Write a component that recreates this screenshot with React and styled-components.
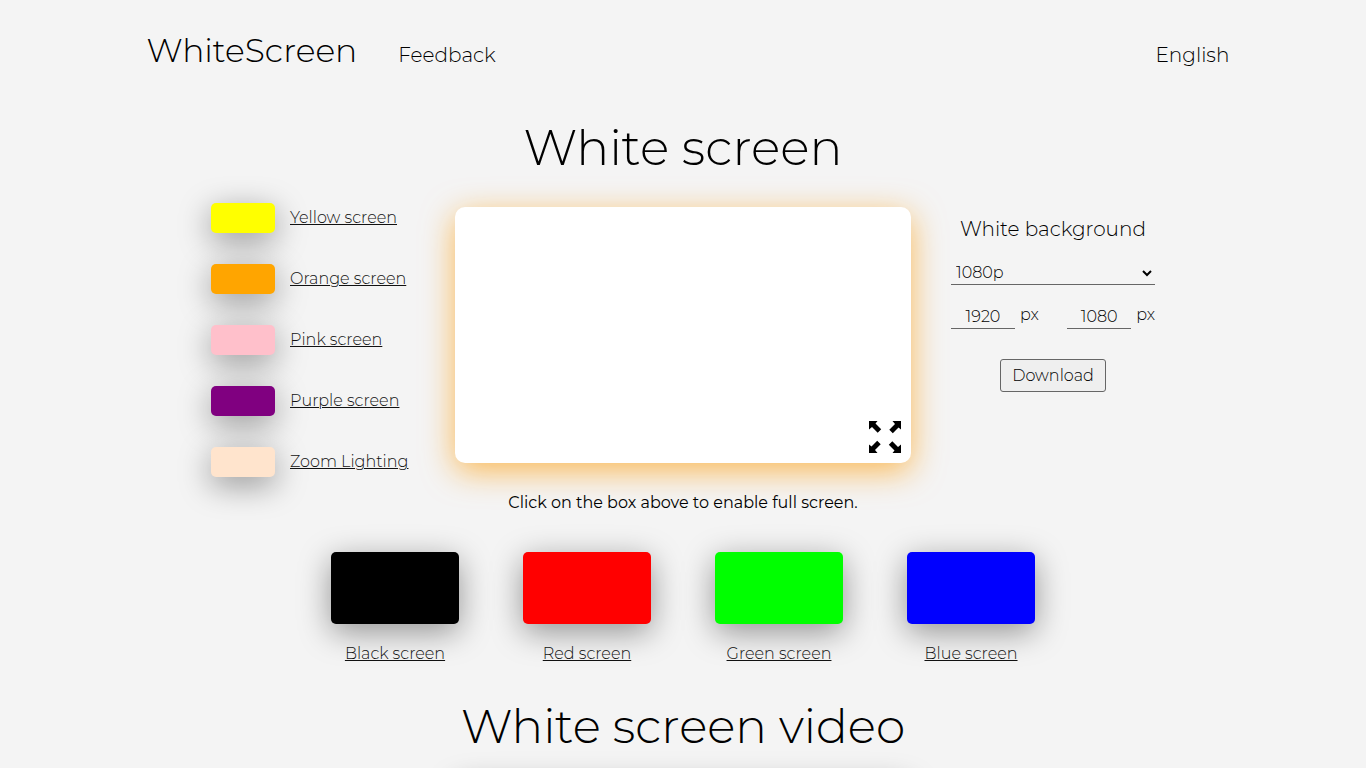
import React, { useState } from 'react';
import styled, { createGlobalStyle } from 'styled-components';

const SIDE_COLORS = [
  { label: 'Yellow screen', color: '#ffff00' },
  { label: 'Orange screen', color: '#ffa500' },
  { label: 'Pink screen', color: '#ffc0cb' },
  { label: 'Purple screen', color: '#800080' },
  { label: 'Zoom Lighting', color: '#ffe4cd' },
];

const MAIN_COLORS = [
  { label: 'Black screen', color: '#000000' },
  { label: 'Red screen', color: '#ff0000' },
  { label: 'Green screen', color: '#00ff00' },
  { label: 'Blue screen', color: '#0000ff' },
];

const RESOLUTIONS = {
  '720p': [1280, 720],
  '1080p': [1920, 1080],
  '1440p': [2560, 1440],
  '4K': [3840, 2160],
};

const GlobalStyle = createGlobalStyle`
  *,
  *::before,
  *::after {
    box-sizing: border-box;
  }

  body {
    margin: 0;
    background: #f4f4f4;
    color: #000;
    font-family: Montserrat, Inter, 'Open Sans', sans-serif;
    font-size: 16px;
    font-weight: 300;
    line-height: 20px;
  }

  a {
    color: inherit;
  }

  button,
  input,
  select {
    color: inherit;
    font: inherit;
  }
`;

const Header = styled.header`
  display: flex;
  align-items: baseline;
  gap: 41px;
  width: 80%;
  margin: 0 auto;
  padding: 30px 0 0 10px;
`;

const Brand = styled.a`
  font-size: 33px;
  line-height: 40px;
  text-decoration: none;
`;

const NavLink = styled.a`
  font-size: 20px;
  line-height: 24px;
  text-decoration: none;

  &:last-child {
    margin-left: auto;
  }
`;

const Title = styled.h1`
  margin: 48px 0 25px;
  font-size: 49px;
  font-weight: 300;
  line-height: 60px;
  text-align: center;
`;

const Stage = styled.section`
  display: flex;
  justify-content: center;
  align-items: flex-start;
  gap: 40px;
`;

const SideList = styled.ul`
  display: flex;
  flex-direction: column;
  gap: 31px;
  width: 204px;
  margin: 0;
  padding: 0;
  list-style: none;
`;

const SideItem = styled.li`
  display: flex;
  align-items: center;
  height: 30px;
`;

const SideLink = styled.a`
  display: flex;
  align-items: center;
  gap: 15px;
  white-space: nowrap;
  color: #111;
  text-decoration-thickness: 1px;
`;

const Swatch = styled.span`
  flex: none;
  width: ${({ $large }) => ($large ? 128 : 64)}px;
  height: ${({ $large }) => ($large ? 72 : 30)}px;
  border-radius: 5px;
  background: ${({ $color }) => $color};
  box-shadow: 0 8px 32px rgba(0, 0, 0, 0.4);
`;

const Preview = styled.div`
  display: flex;
  flex-direction: column;
  align-items: center;
  gap: 30px;
  width: 456px;
  padding-top: 4px;
`;

const ScreenButton = styled.button`
  display: flex;
  justify-content: flex-end;
  align-items: flex-end;
  width: 100%;
  aspect-ratio: 57 / 32;
  padding: 10px;
  border: 0;
  border-radius: 10px;
  background: #fff;
  box-shadow: 0 8px 32px rgba(255, 153, 0, 0.65);
  cursor: pointer;
`;

const Hint = styled.p`
  margin: 0;
  font-weight: 400;
`;

const Form = styled.form`
  display: flex;
  flex-direction: column;
  align-items: center;
  width: 204px;
  padding-top: 14px;
`;

const FormTitle = styled.h2`
  margin: 0 0 20px;
  font-size: 20px;
  font-weight: 300;
  line-height: 24px;
  white-space: nowrap;
`;

const Select = styled.select`
  width: 100%;
  height: 24px;
  padding: 0 0 0 1px;
  border: 0;
  border-bottom: 1px solid #666;
  background: transparent;
`;

const SizeRow = styled.div`
  display: flex;
  justify-content: space-between;
  width: 100%;
  margin-top: 20px;
`;

const SizeLabel = styled.label`
  display: flex;
  gap: 5px;
`;

const SizeInput = styled.input`
  width: 64px;
  height: 24px;
  padding: 0;
  border: 0;
  border-bottom: 1px solid #666;
  background: transparent;
  text-align: center;
`;

const DownloadButton = styled.button`
  height: 33px;
  margin-top: 30px;
  padding: 0 11px;
  border: 1px solid #666;
  border-radius: 3px;
  background: #efefef;
  cursor: pointer;
`;

const ColorGrid = styled.ul`
  display: flex;
  justify-content: center;
  flex-wrap: wrap;
  gap: 64px;
  margin: 39px 0 0;
  padding: 0;
  list-style: none;
`;

const ColorLink = styled.a`
  display: flex;
  flex-direction: column;
  align-items: center;
  gap: 20px;
  color: #111;
  text-decoration-thickness: 1px;
`;

const VideoSection = styled.section`
  display: flex;
  flex-direction: column;
  align-items: center;
  margin-top: 33px;
  padding-bottom: 60px;
`;

const VideoTitle = styled.h2`
  margin: 0 0 22px;
  font-size: 47px;
  font-weight: 300;
  line-height: 60px;
`;

const VideoBox = styled.div`
  width: 456px;
  aspect-ratio: 57 / 32;
  border-radius: 10px;
  background: #fff;
  box-shadow: 0 8px 32px rgba(0, 0, 0, 0.4);
`;

function ExpandIcon() {
  return (
    <svg width="32" height="32" viewBox="0 0 32 32" aria-hidden="true">
      {[0, 90, 180, 270].map((angle) => (
        <path
          key={angle}
          transform={`rotate(${angle} 16 16)`}
          d="M0 0H8.5L6.5 2.5L12.2 8.2L8.7 11.7L3 6L0 8.5Z"
        />
      ))}
    </svg>
  );
}

function DownloadForm() {
  const [preset, setPreset] = useState('1080p');
  const [size, setSize] = useState(RESOLUTIONS['1080p']);

  const handlePreset = (e) => {
    setPreset(e.target.value);
    setSize(RESOLUTIONS[e.target.value]);
  };

  return (
    <Form onSubmit={(e) => e.preventDefault()}>
      <FormTitle>White background</FormTitle>
      <Select aria-label="Resolution" value={preset} onChange={handlePreset}>
        {Object.keys(RESOLUTIONS).map((name) => (
          <option key={name}>{name}</option>
        ))}
      </Select>
      <SizeRow>
        <SizeLabel>
          <SizeInput
            aria-label="Width"
            value={size[0]}
            onChange={(e) => setSize([e.target.value, size[1]])}
          />
          px
        </SizeLabel>
        <SizeLabel>
          <SizeInput
            aria-label="Height"
            value={size[1]}
            onChange={(e) => setSize([size[0], e.target.value])}
          />
          px
        </SizeLabel>
      </SizeRow>
      <DownloadButton type="submit">Download</DownloadButton>
    </Form>
  );
}

export default function App() {
  return (
    <>
      <GlobalStyle />
      <Header>
        <Brand href="#">WhiteScreen</Brand>
        <NavLink href="#feedback">Feedback</NavLink>
        <NavLink href="#language">English</NavLink>
      </Header>
      <main>
        <Title>White screen</Title>
        <Stage>
          <SideList>
            {SIDE_COLORS.map(({ label, color }) => (
              <SideItem key={label}>
                <SideLink href="#">
                  <Swatch $color={color} />
                  {label}
                </SideLink>
              </SideItem>
            ))}
          </SideList>
          <Preview>
            <ScreenButton type="button" aria-label="Full screen">
              <ExpandIcon />
            </ScreenButton>
            <Hint>Click on the box above to enable full screen.</Hint>
          </Preview>
          <DownloadForm />
        </Stage>
        <ColorGrid>
          {MAIN_COLORS.map(({ label, color }) => (
            <li key={label}>
              <ColorLink href="#">
                <Swatch $large $color={color} />
                {label}
              </ColorLink>
            </li>
          ))}
        </ColorGrid>
        <VideoSection>
          <VideoTitle>White screen video</VideoTitle>
          <VideoBox />
        </VideoSection>
      </main>
    </>
  );
}
